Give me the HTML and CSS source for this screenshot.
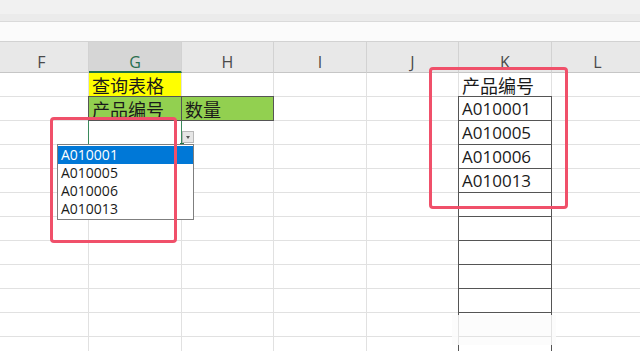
FILE: index.html
```html
<!DOCTYPE html>
<html lang="zh-CN">
<head>
    <meta charset="UTF-8">
    <meta name="viewport" content="width=device-width, initial-scale=1.0">
    <title>查询表格</title>
    <link rel="stylesheet" href="styles.css">
</head>
<body>
    <div class="app">
        <!-- Ribbon strip and formula bar -->
        <div class="toolbar"></div>
        <div class="formula-bar"></div>

        <!-- Column letters -->
        <div class="col-heads">
            <div class="col-head">F</div>
            <div class="col-head current">G</div>
            <div class="col-head">H</div>
            <div class="col-head">I</div>
            <div class="col-head">J</div>
            <div class="col-head">K</div>
            <div class="col-head">L</div>
        </div>

        <!-- Cells -->
        <div class="sheet">
            <div class="cell"></div><div class="cell cjk yellow">查询表格</div><div class="cell"></div><div class="cell"></div><div class="cell"></div><div class="cell cjk">产品编号</div><div class="cell"></div>
            <div class="cell"></div><div class="cell cjk green boxed">产品编号</div><div class="cell cjk green boxed">数量</div><div class="cell"></div><div class="cell"></div><div class="cell num boxed">A010001</div><div class="cell"></div>
            <div class="cell"></div><div class="cell active"></div><div class="cell"></div><div class="cell"></div><div class="cell"></div><div class="cell num boxed">A010005</div><div class="cell"></div>
            <div class="cell"></div><div class="cell"></div><div class="cell"></div><div class="cell"></div><div class="cell"></div><div class="cell num boxed">A010006</div><div class="cell"></div>
            <div class="cell"></div><div class="cell"></div><div class="cell"></div><div class="cell"></div><div class="cell"></div><div class="cell num boxed">A010013</div><div class="cell"></div>
            <div class="cell"></div><div class="cell"></div><div class="cell"></div><div class="cell"></div><div class="cell"></div><div class="cell boxed"></div><div class="cell"></div>
            <div class="cell"></div><div class="cell"></div><div class="cell"></div><div class="cell"></div><div class="cell"></div><div class="cell boxed"></div><div class="cell"></div>
            <div class="cell"></div><div class="cell"></div><div class="cell"></div><div class="cell"></div><div class="cell"></div><div class="cell boxed"></div><div class="cell"></div>
            <div class="cell"></div><div class="cell"></div><div class="cell"></div><div class="cell"></div><div class="cell"></div><div class="cell boxed"></div><div class="cell"></div>
            <div class="cell"></div><div class="cell"></div><div class="cell"></div><div class="cell"></div><div class="cell"></div><div class="cell boxed"></div><div class="cell"></div>
            <div class="cell"></div><div class="cell"></div><div class="cell"></div><div class="cell"></div><div class="cell"></div><div class="cell boxed"></div><div class="cell"></div>
            <div class="cell"></div><div class="cell"></div><div class="cell"></div><div class="cell"></div><div class="cell"></div><div class="cell boxed"></div><div class="cell"></div>
        </div>

        <!-- Data validation dropdown -->
        <div class="drop-btn"></div>
        <ul class="pick-list">
            <li class="picked">A010001</li>
            <li>A010005</li>
            <li>A010006</li>
            <li>A010013</li>
        </ul>

        <!-- Red highlight frames -->
        <div class="mark mark-left"></div>
        <div class="mark mark-right"></div>

        <div class="scroll-fade"></div>
    </div>
</body>
</html>
```

FILE: styles.css
```css
/* Spreadsheet screenshot */
body {
    margin: 0;
    padding: 0;
    background: #ffffff;
    font-family: 'Open Sans', 'Noto Sans CJK SC', sans-serif;
    color: #1a1a1a;
}

.app {
    position: relative;
    width: 640px;
    height: 351px;
    overflow: hidden;
}

.toolbar {
    height: 22px;
    box-sizing: border-box;
    background: linear-gradient(#f1f1f1 0 14px, #ebebeb 14px);
    border-bottom: 1px solid #dadada;
}

.formula-bar {
    height: 20px;
    box-sizing: border-box;
    background: #fbfbfb;
    border-bottom: 1px solid #d2d2d2;
}

.col-heads,
.sheet {
    display: grid;
    grid-template-columns: 94px 93px 92px 93px 92px 93px 92px;
    margin-left: -5px;
}

.col-head {
    height: 31px;
    box-sizing: border-box;
    padding-top: 10px;
    line-height: 20px;
    text-align: center;
    font-size: 16px;
    color: #4a4a4a;
    background: #e8e8e8;
    border-right: 1px solid #d2d2d2;
    border-bottom: 1px solid #c6c6c6;
}

.col-head.current {
    background: #d6d6d6;
    color: #2a6e4e;
    border-bottom: 2px solid #217346;
}

.sheet {
    grid-auto-rows: 24px;
}

.cell {
    position: relative;
    box-sizing: border-box;
    padding: 0 3px;
    border-right: 1px solid #e1e1e1;
    border-bottom: 1px solid #e1e1e1;
    white-space: nowrap;
}

.cjk {
    font-family: 'Noto Sans CJK SC', sans-serif;
    font-size: 18px;
    padding-top: 2px;
    line-height: 21px;
}

.num {
    font-size: 17px;
    padding-top: 1px;
    line-height: 21px;
}

.yellow {
    background: #ffff00;
}

.green {
    background: #92d050;
}

.boxed {
    border-right-color: #555555;
    border-bottom-color: #555555;
    box-shadow: -1px 0 0 #555555, 0 -1px 0 #555555, -1px -1px 0 #555555;
}

.active {
    border-right-color: #3a8a5c;
    box-shadow: -1px 0 0 #3a8a5c;
}

.active::after {
    content: "";
    position: absolute;
    right: -3px;
    bottom: -3px;
    width: 4px;
    height: 4px;
    background: #217346;
}

.drop-btn {
    position: absolute;
    left: 182px;
    top: 131px;
    width: 12px;
    height: 12px;
    box-sizing: border-box;
    background: #e6e6e6;
    border: 1px solid #b8b8b8;
}

.drop-btn::after {
    content: "";
    position: absolute;
    left: 3px;
    top: 4px;
    border-left: 2.5px solid transparent;
    border-right: 2.5px solid transparent;
    border-top: 3px solid #555555;
}

.pick-list {
    position: absolute;
    left: 57px;
    top: 144px;
    width: 137px;
    margin: 0;
    padding: 1px 0;
    box-sizing: border-box;
    list-style: none;
    background: #ffffff;
    border: 1px solid #7f7f7f;
    font-size: 14px;
}

.pick-list li {
    height: 18px;
    line-height: 17px;
    padding-left: 3px;
    color: #1a1a1a;
}

.pick-list li.picked {
    background: #0078d7;
    color: #ffffff;
}

.mark {
    position: absolute;
    box-sizing: border-box;
    border: 3px solid #f0506a;
    border-radius: 4px;
}

.mark-left {
    left: 50px;
    top: 117px;
    width: 127px;
    height: 126px;
}

.mark-right {
    left: 429px;
    top: 67px;
    width: 139px;
    height: 142px;
}

.scroll-fade {
    position: absolute;
    left: 452px;
    top: 315px;
    width: 104px;
    height: 30px;
    background: rgba(252, 252, 252, 0.85);
}
```
